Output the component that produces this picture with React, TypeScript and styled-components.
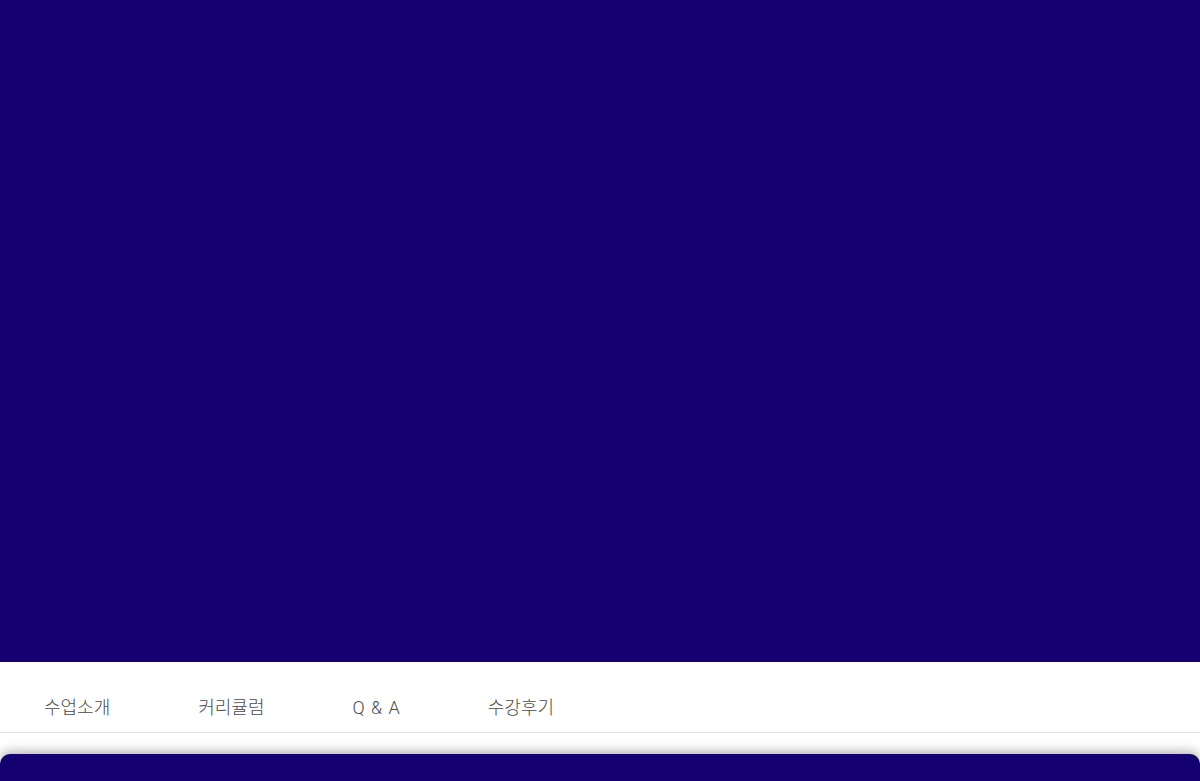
import React from "react";
import styled, { createGlobalStyle } from "styled-components";

const Global = createGlobalStyle`
  html, body { margin: 0; padding: 0; background: #ffffff; }
  body { font-family: Roboto, "Noto Sans CJK KR", "Noto Sans", sans-serif; overflow: hidden; }
`;

const Page = styled.div`
  display: flex;
  flex-direction: column;
  width: 1200px;
  height: 781px;
  overflow: hidden;
`;

const Hero = styled.section`
  height: 662px;
  background: #140070;
  flex-shrink: 0;
`;

const TabBar = styled.nav`
  display: flex;
  align-items: center;
  height: 70px;
  border-bottom: 1px solid #e2e2e2;
  background: #ffffff;
  flex-shrink: 0;
`;

const Tab = styled.a`
  padding: 22px 44px 0;
  font-size: 18px;
  font-weight: 300;
  line-height: 24px;
  word-spacing: 2px;
  color: #4a4a4a;
  text-decoration: none;
  cursor: pointer;
`;

const Spacer = styled.div`
  height: 21px;
  flex-shrink: 0;
`;

const Card = styled.section`
  flex: 1;
  background: #140070;
  border-radius: 10px 10px 0 0;
  box-shadow: 0 -4px 10px rgba(0, 0, 0, 0.25);
`;

const tabs = ["수업소개", "커리큘럼", "Q & A", "수강후기"];

export default function App() {
  return (
    <>
      <Global />
      <Page>
        <Hero />
        <TabBar>
          {tabs.map((t) => (
            <Tab key={t}>{t}</Tab>
          ))}
        </TabBar>
        <Spacer />
        <Card />
      </Page>
    </>
  );
}
